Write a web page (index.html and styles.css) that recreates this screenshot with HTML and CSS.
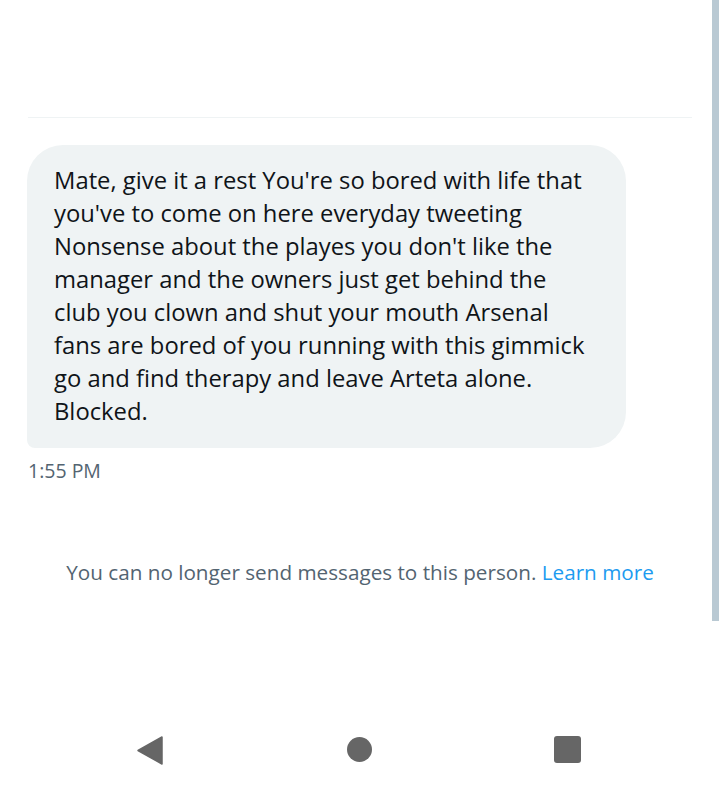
FILE: index.html
```html
<!DOCTYPE html>
<html lang="en">
<head>
<meta charset="utf-8">
<title>Messages</title>
<link rel="stylesheet" href="styles.css">
</head>
<body>
<div class="screen">
  <main class="thread">
    <div class="divider"></div>
    <div class="message">
      <div class="bubble">Mate, give it a rest You're so bored with life that you've to come on here everyday tweeting Nonsense about the playes you don't like the manager and the owners just get behind the club you clown and shut your mouth Arsenal fans are bored of you running with this gimmick go and find therapy and leave Arteta alone. Blocked.</div>
      <div class="time">1:55 PM</div>
    </div>
    <p class="notice">You can no longer send messages to this person. <a class="link" href="#">Learn more</a></p>
  </main>
  <nav class="navbar">
    <svg class="nav-icon" width="28" height="30" viewBox="0 0 28 30"><path d="M1 14.5 L25 1 L25 28 Z" fill="#666" stroke="#666" stroke-width="1.5" stroke-linejoin="round"/></svg>
    <span class="nav-home"></span>
    <span class="nav-recent"></span>
  </nav>
  <div class="scrollbar"></div>
</div>
</body>
</html>
```

FILE: styles.css
```css
html, body {
  margin: 0;
  padding: 0;
  background: #ffffff;
}
.screen {
  position: relative;
  width: 720px;
  height: 791px;
  overflow: hidden;
  font-family: "Open Sans", "Noto Sans", sans-serif;
}
.thread {
  padding: 117px 28px 0 28px;
  height: 674px;
  box-sizing: border-box;
}
.divider {
  height: 1px;
  background: #eff3f4;
}
.message {
  margin-top: 27px;
  display: flex;
  flex-direction: column;
  align-items: flex-start;
}
.bubble {
  box-sizing: border-box;
  width: 599px;
  margin-left: -1px;
  padding: 19px 36px 20px 27px;
  background: #eff3f4;
  border-radius: 36px 36px 36px 8px;
  color: #0f1419;
  font-size: 23.8px;
  line-height: 33px;
}
.time {
  margin-top: 11px;
  color: #536471;
  font-size: 19.5px;
  line-height: 24px;
}
.notice {
  margin: 76px 0 0 0;
  text-align: center;
  color: #536471;
  font-size: 20.7px;
  line-height: 26px;
}
.link {
  color: #1d9bf0;
  text-decoration: none;
}
.navbar {
  height: 117px;
  display: flex;
  align-items: flex-start;
  padding-top: 62px;
  box-sizing: border-box;
}
.nav-icon {
  margin-left: 137px;
}
.nav-home {
  width: 25px;
  height: 25px;
  border-radius: 50%;
  background: #666;
  margin-left: 182px;
  margin-top: 1px;
}
.nav-recent {
  width: 27px;
  height: 27px;
  border-radius: 3px;
  background: #666;
  margin-left: 182px;
}
.scrollbar {
  position: absolute;
  top: 0;
  left: 712px;
  width: 7px;
  height: 621px;
  background: #b9c9d3;
}
```
